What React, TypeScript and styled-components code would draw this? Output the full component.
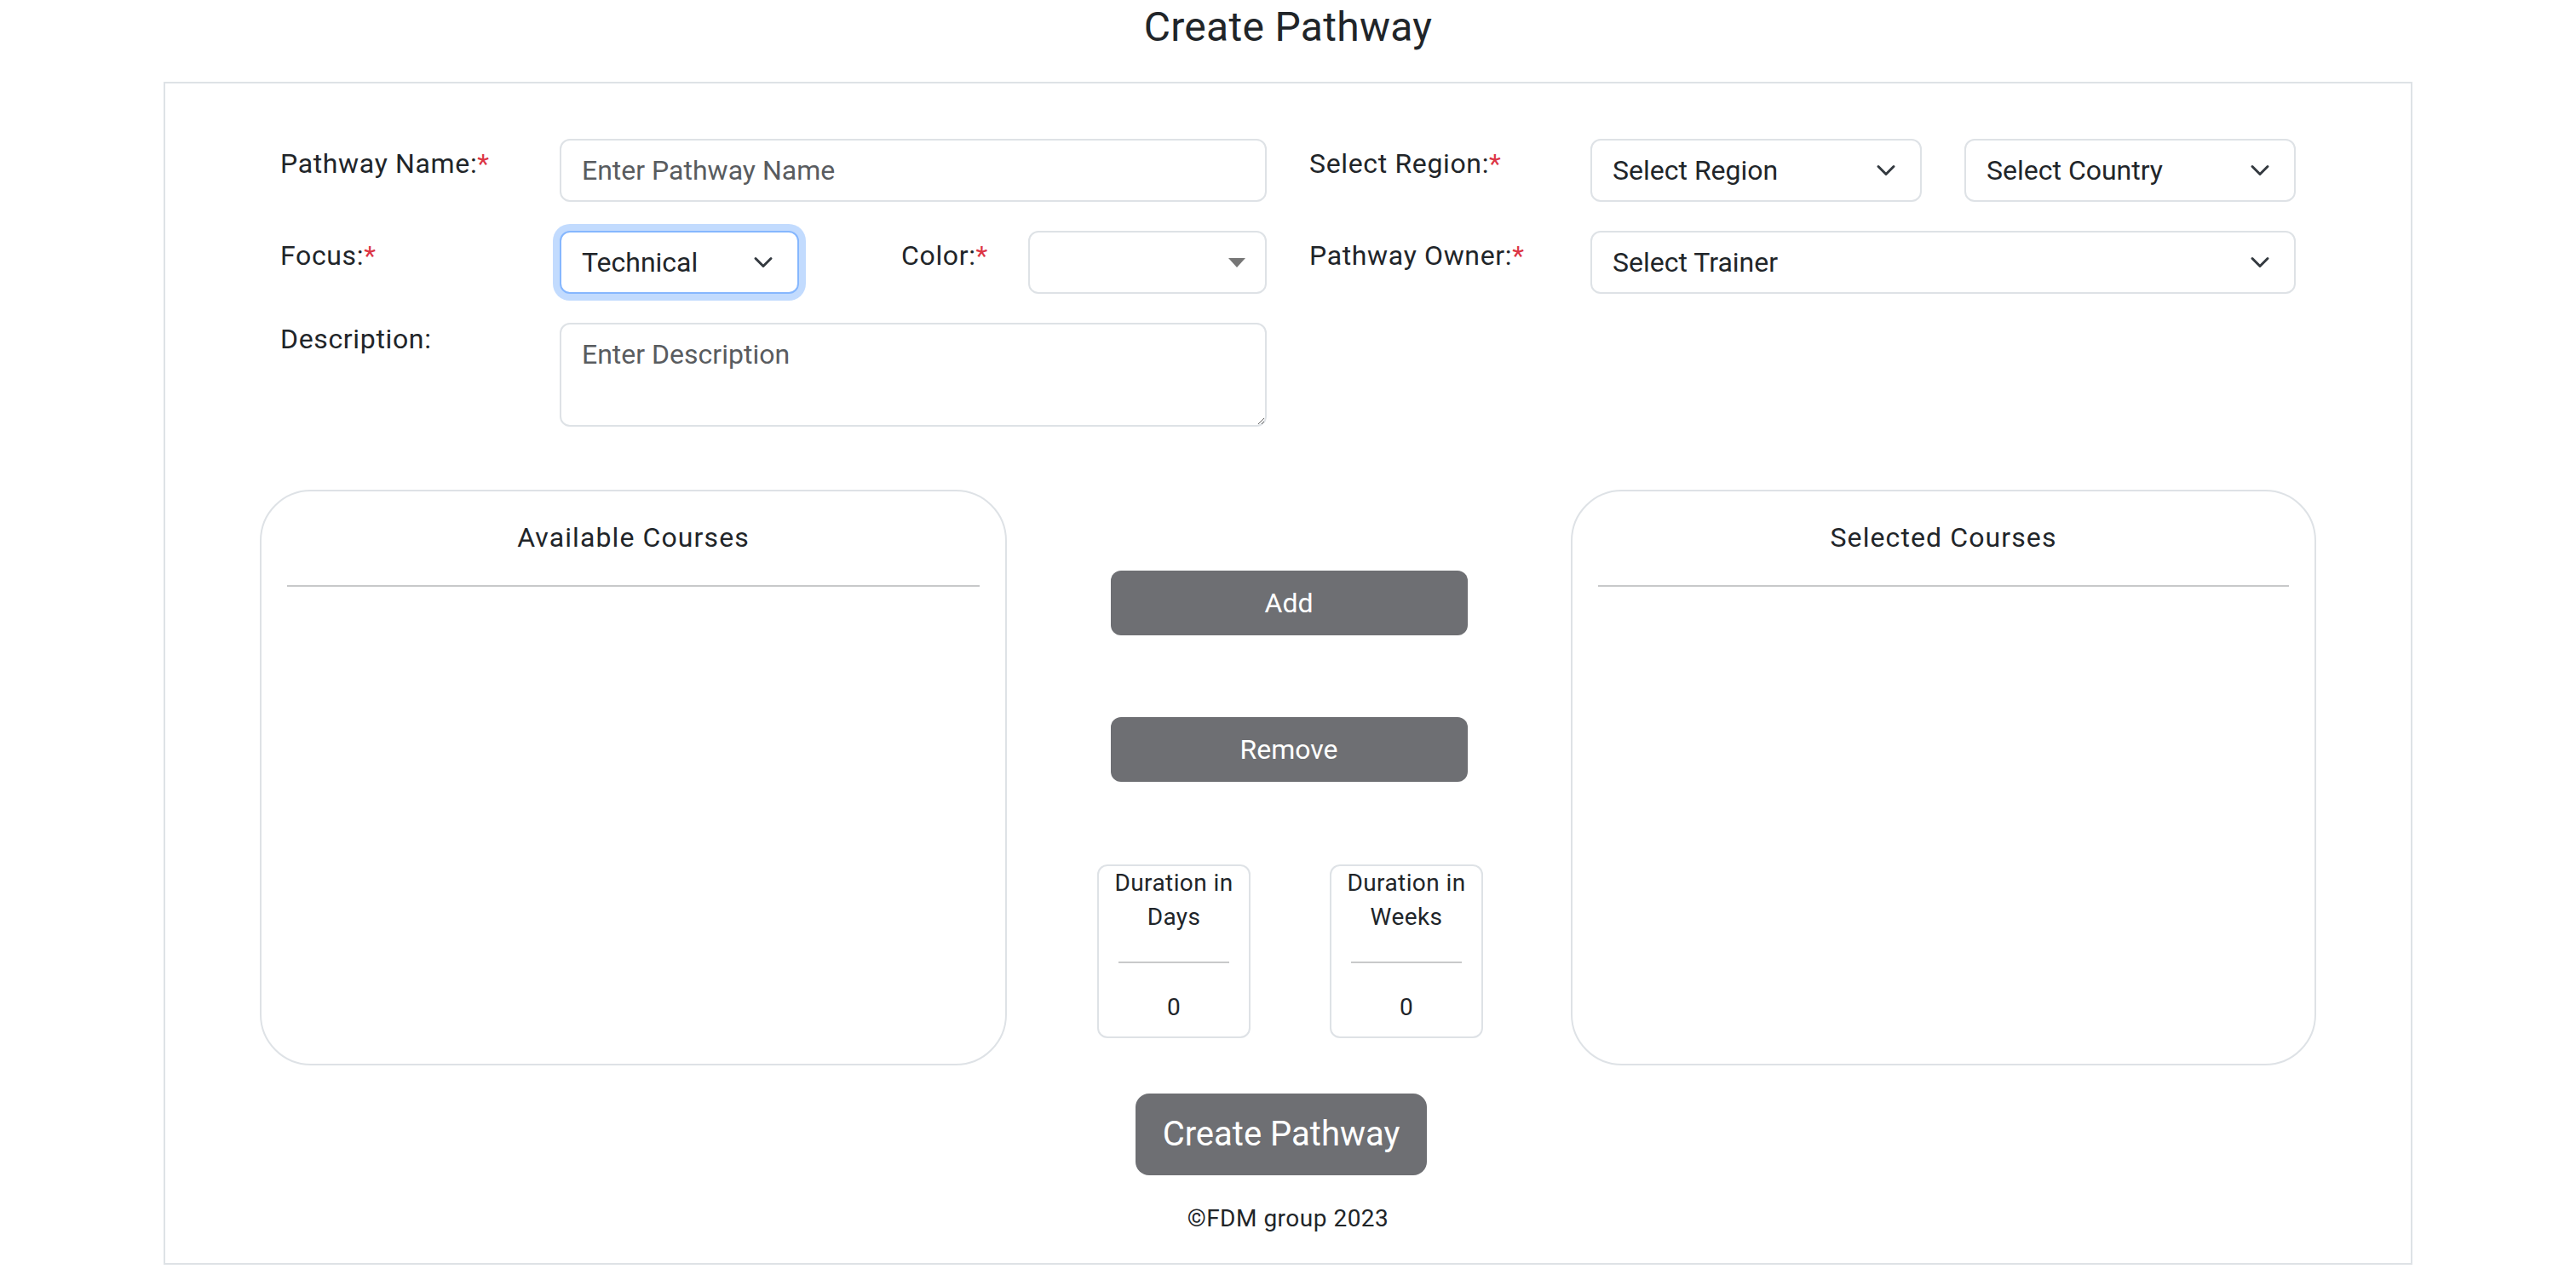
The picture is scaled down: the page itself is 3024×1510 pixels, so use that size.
import React from "react";
import styled, { createGlobalStyle } from "styled-components";

const GlobalStyle = createGlobalStyle`
  html, body {
    margin: 0;
    padding: 0;
    background: #ffffff;
  }
  body {
    font-family: Roboto, "Liberation Sans", Arial, sans-serif;
    color: #212529;
    width: 3024px;
  }
  * { box-sizing: border-box; }
`;

const Page = styled.div`
  width: 3024px;
  padding-bottom: 25px;
`;

const Title = styled.h1`
  margin: 0 0 35px;
  padding-top: 3px;
  font-size: 48px;
  line-height: 58px;
  font-weight: 400;
  letter-spacing: 0.3px;
  text-align: center;
  color: #212529;
`;

const Container = styled.div`
  width: 2640px;
  margin: 0 auto;
  border: 2px solid #dee2e6;
  padding: 65px 0 31px;
`;

const FormGrid = styled.div`
  display: grid;
  grid-template-columns: 328px 830px 50px 330px 828px;
  grid-template-rows: 74px 74px 122px;
  row-gap: 34px;
  padding: 0 135px;
`;

const Label = styled.label<{ $offset?: number }>`
  align-self: start;
  margin-top: ${(p) => p.$offset ?? 5}px;
  font-size: 32px;
  line-height: 48px;
  letter-spacing: 0.65px;
  color: #212529;
  white-space: nowrap;
`;

const Req = styled.span`
  color: #dc3545;
`;

const TextInput = styled.input`
  width: 100%;
  height: 74px;
  border: 2px solid #dee2e6;
  border-radius: 12px;
  padding: 11px 24px;
  font-family: inherit;
  font-size: 32px;
  line-height: 48px;
  color: #212529;
  outline: none;
  &::placeholder {
    color: #595c5f;
    opacity: 1;
  }
`;

const TextArea = styled.textarea`
  width: 100%;
  height: 122px;
  border: 2px solid #dee2e6;
  border-radius: 12px;
  padding: 11px 24px;
  font-family: inherit;
  font-size: 32px;
  line-height: 48px;
  color: #212529;
  outline: none;
  resize: vertical;
  &::placeholder {
    color: #595c5f;
    opacity: 1;
  }
`;

const SelectBox = styled.div<{ $width?: number; $focused?: boolean }>`
  width: ${(p) => (p.$width ? `${p.$width}px` : "100%")};
  height: 74px;
  flex-shrink: 0;
  display: flex;
  align-items: center;
  justify-content: space-between;
  padding: 0 28px 0 24px;
  border: 2px solid ${(p) => (p.$focused ? "#86b7fe" : "#dee2e6")};
  border-radius: 12px;
  box-shadow: ${(p) => (p.$focused ? "0 0 0 8px rgba(13, 110, 253, 0.25)" : "none")};
  background: #ffffff;
  font-size: 32px;
  line-height: 48px;
  color: #212529;
  white-space: nowrap;
`;

const ColorBox = styled.div`
  width: 280px;
  height: 74px;
  flex-shrink: 0;
  display: flex;
  align-items: center;
  justify-content: flex-end;
  padding-right: 23px;
  border: 2px solid #dee2e6;
  border-radius: 12px;
`;

const Caret = styled.span`
  width: 0;
  height: 0;
  border-left: 10px solid transparent;
  border-right: 10px solid transparent;
  border-top: 11px solid #767676;
`;

const InlineRow = styled.div<{ $gap?: number }>`
  display: flex;
  align-items: flex-start;
  gap: ${(p) => p.$gap ?? 0}px;
`;

const InlineLabel = styled(Label)`
  width: 149px;
  margin-left: 120px;
  flex-shrink: 0;
`;

const Spacer = styled.div``;

const Courses = styled.div`
  display: grid;
  grid-template-columns: 877px 1fr 875px;
  padding: 0 111px;
  margin-top: 74px;
`;

const CourseCard = styled.div`
  height: 676px;
  border: 2px solid #dee2e6;
  border-radius: 60px;
  padding-top: 30px;
`;

const CardTitle = styled.div`
  font-size: 32px;
  line-height: 48px;
  text-align: center;
  letter-spacing: 1.1px;
  color: #212529;
`;

const CardRule = styled.hr`
  margin: 32px 30px 0;
  border: 0;
  border-top: 2px solid #c8c9ca;
`;

const Middle = styled.div`
  display: flex;
  flex-direction: column;
  align-items: center;
  padding-top: 95px;
`;

const GreyButton = styled.button<{ $top?: number }>`
  width: 419px;
  height: 76px;
  margin-top: ${(p) => p.$top ?? 0}px;
  border: 0;
  border-radius: 12px;
  background: #6e6f73;
  color: #ffffff;
  font-family: inherit;
  font-size: 32px;
  line-height: 48px;
`;

const DurationRow = styled.div`
  display: flex;
  gap: 93px;
  margin-top: 97px;
  padding-left: 3px;
`;

const DurationBox = styled.div`
  width: 180px;
  border: 2px solid #dee2e6;
  border-radius: 12px;
  padding-bottom: 14px;
  text-align: center;
  font-size: 28px;
  line-height: 40px;
  letter-spacing: 0.4px;
  color: #212529;
`;

const DurationRule = styled.hr`
  margin: 32px 23px;
  border: 0;
  border-top: 2px solid #c8c9ca;
`;

const Bottom = styled.div`
  display: flex;
  flex-direction: column;
  align-items: center;
  margin-top: 33px;
`;

const CreateButton = styled.button`
  height: 96px;
  padding: 0 32px;
  margin-right: 16px;
  border: 0;
  border-radius: 16px;
  background: #6e6f73;
  color: #ffffff;
  font-family: inherit;
  font-size: 40px;
  line-height: 60px;
`;

const Footer = styled.div`
  margin-top: 30px;
  font-size: 28px;
  line-height: 42px;
  letter-spacing: 0.5px;
  color: #212529;
`;

const Chevron = () => (
  <svg width="24" height="24" viewBox="0 0 16 16" fill="none">
    <path
      d="M2 5l6 6 6-6"
      stroke="#343a40"
      strokeWidth="2"
      strokeLinecap="round"
      strokeLinejoin="round"
    />
  </svg>
);

const Select = ({
  text,
  width,
  focused,
}: {
  text: string;
  width?: number;
  focused?: boolean;
}) => (
  <SelectBox $width={width} $focused={focused}>
    <span>{text}</span>
    <Chevron />
  </SelectBox>
);

const Duration = ({ title, value }: { title: string; value: number }) => (
  <DurationBox>
    {title}
    <DurationRule />
    {value}
  </DurationBox>
);

export default function App() {
  return (
    <Page>
      <GlobalStyle />
      <Title>Create Pathway</Title>
      <Container>
        <FormGrid>
          <Label>
            Pathway Name:<Req>*</Req>
          </Label>
          <TextInput placeholder="Enter Pathway Name" />
          <Spacer />
          <Label>
            Select Region:<Req>*</Req>
          </Label>
          <InlineRow $gap={50}>
            <Select text="Select Region" width={389} />
            <Select text="Select Country" width={389} />
          </InlineRow>

          <Label>
            Focus:<Req>*</Req>
          </Label>
          <InlineRow>
            <Select text="Technical" width={281} focused />
            <InlineLabel>
              Color:<Req>*</Req>
            </InlineLabel>
            <ColorBox>
              <Caret />
            </ColorBox>
          </InlineRow>
          <Spacer />
          <Label>
            Pathway Owner:<Req>*</Req>
          </Label>
          <Select text="Select Trainer" />

          <Label $offset={-5}>Description:</Label>
          <TextArea placeholder="Enter Description" />
        </FormGrid>

        <Courses>
          <CourseCard>
            <CardTitle>Available Courses</CardTitle>
            <CardRule />
          </CourseCard>
          <Middle>
            <GreyButton>Add</GreyButton>
            <GreyButton $top={96}>Remove</GreyButton>
            <DurationRow>
              <Duration title="Duration in Days" value={0} />
              <Duration title="Duration in Weeks" value={0} />
            </DurationRow>
          </Middle>
          <CourseCard>
            <CardTitle>Selected Courses</CardTitle>
            <CardRule />
          </CourseCard>
        </Courses>

        <Bottom>
          <CreateButton>Create Pathway</CreateButton>
          <Footer>©FDM group 2023</Footer>
        </Bottom>
      </Container>
    </Page>
  );
}
